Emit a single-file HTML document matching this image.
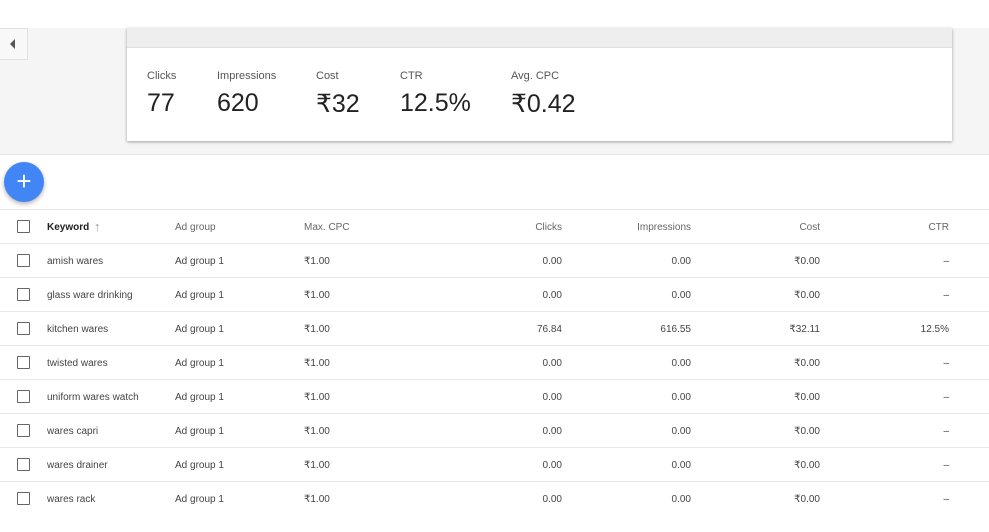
<!DOCTYPE html><html><head><style>
*{margin:0;padding:0;box-sizing:border-box}
body{width:989px;height:532px;overflow:hidden;background:#fff;font-family:"Liberation Sans",Arial,sans-serif;position:relative;color:#333}
.gray{position:absolute;left:0;top:28px;width:989px;height:127px;background:#f5f5f5;border-bottom:1px solid #e6e6e6}
.tab{position:absolute;left:0;top:28px;width:28px;height:32px;background:#f8f8f8;border:1px solid #e2e2e2;border-left:none}
.tab:after{content:"";position:absolute;left:10px;top:10px;border-right:5px solid #555;border-top:5px solid transparent;border-bottom:5px solid transparent}
.card{position:absolute;left:127px;top:28px;width:825px;height:113px;background:#fff;box-shadow:0 1px 3px rgba(0,0,0,.35)}
.card .hd{height:20px;background:#eeeeee;border-bottom:1px solid #e0e0e0}
.m{position:absolute;top:42px}
.m .l{font-size:11px;color:#555}
.m .v{font-size:25px;color:#222;margin-top:7px}
.fab{position:absolute;left:4px;top:162px;width:40px;height:40px;border-radius:50%;background:#4285f4;box-shadow:0 2px 5px rgba(0,0,0,.3);color:#fff;font-size:26px;text-align:center;line-height:38px}
.row{position:absolute;left:0;width:989px;height:34px;border-top:1px solid #e8e8e8;font-size:10px;color:#444}
.row span{position:absolute;top:12px;white-space:nowrap}
.cb{position:absolute;left:17px;top:10px;width:13px;height:13px;border:1.5px solid #666;border-radius:1px}
.h{color:#666}
</style></head><body>
<div class="gray"></div>
<div class="tab"></div>
<div class="card"><div class="hd"></div>
<div class="m" style="left:20px"><div class="l">Clicks</div><div class="v">77</div></div>
<div class="m" style="left:90px"><div class="l">Impressions</div><div class="v">620</div></div>
<div class="m" style="left:189px"><div class="l">Cost</div><div class="v">₹32</div></div>
<div class="m" style="left:273px"><div class="l">CTR</div><div class="v">12.5%</div></div>
<div class="m" style="left:384px"><div class="l">Avg. CPC</div><div class="v">₹0.42</div></div>
</div>
<div class="fab">+</div>
<div class="row h" style="top:209px"><div class="cb"></div><span style="left:47px;color:#222;font-weight:bold">Keyword</span><span style="left:94px;top:9px;color:#999;font-size:13px">↑</span><span style="left:175px">Ad group</span><span style="left:304px">Max. CPC</span><span style="right:427px">Clicks</span><span style="right:298px">Impressions</span><span style="right:169px">Cost</span><span style="right:40px">CTR</span></div>
<div class="row" style="top:243px"><div class="cb"></div><span style="left:47px">amish wares</span><span style="left:175px">Ad group 1</span><span style="left:304px">₹1.00</span><span style="right:427px">0.00</span><span style="right:298px">0.00</span><span style="right:169px">₹0.00</span><span style="right:40px">–</span></div>
<div class="row" style="top:277px"><div class="cb"></div><span style="left:47px">glass ware drinking</span><span style="left:175px">Ad group 1</span><span style="left:304px">₹1.00</span><span style="right:427px">0.00</span><span style="right:298px">0.00</span><span style="right:169px">₹0.00</span><span style="right:40px">–</span></div>
<div class="row" style="top:311px"><div class="cb"></div><span style="left:47px">kitchen wares</span><span style="left:175px">Ad group 1</span><span style="left:304px">₹1.00</span><span style="right:427px">76.84</span><span style="right:298px">616.55</span><span style="right:169px">₹32.11</span><span style="right:40px">12.5%</span></div>
<div class="row" style="top:345px"><div class="cb"></div><span style="left:47px">twisted wares</span><span style="left:175px">Ad group 1</span><span style="left:304px">₹1.00</span><span style="right:427px">0.00</span><span style="right:298px">0.00</span><span style="right:169px">₹0.00</span><span style="right:40px">–</span></div>
<div class="row" style="top:379px"><div class="cb"></div><span style="left:47px">uniform wares watch</span><span style="left:175px">Ad group 1</span><span style="left:304px">₹1.00</span><span style="right:427px">0.00</span><span style="right:298px">0.00</span><span style="right:169px">₹0.00</span><span style="right:40px">–</span></div>
<div class="row" style="top:413px"><div class="cb"></div><span style="left:47px">wares capri</span><span style="left:175px">Ad group 1</span><span style="left:304px">₹1.00</span><span style="right:427px">0.00</span><span style="right:298px">0.00</span><span style="right:169px">₹0.00</span><span style="right:40px">–</span></div>
<div class="row" style="top:447px"><div class="cb"></div><span style="left:47px">wares drainer</span><span style="left:175px">Ad group 1</span><span style="left:304px">₹1.00</span><span style="right:427px">0.00</span><span style="right:298px">0.00</span><span style="right:169px">₹0.00</span><span style="right:40px">–</span></div>
<div class="row" style="top:481px"><div class="cb"></div><span style="left:47px">wares rack</span><span style="left:175px">Ad group 1</span><span style="left:304px">₹1.00</span><span style="right:427px">0.00</span><span style="right:298px">0.00</span><span style="right:169px">₹0.00</span><span style="right:40px">–</span></div>
</body></html>
